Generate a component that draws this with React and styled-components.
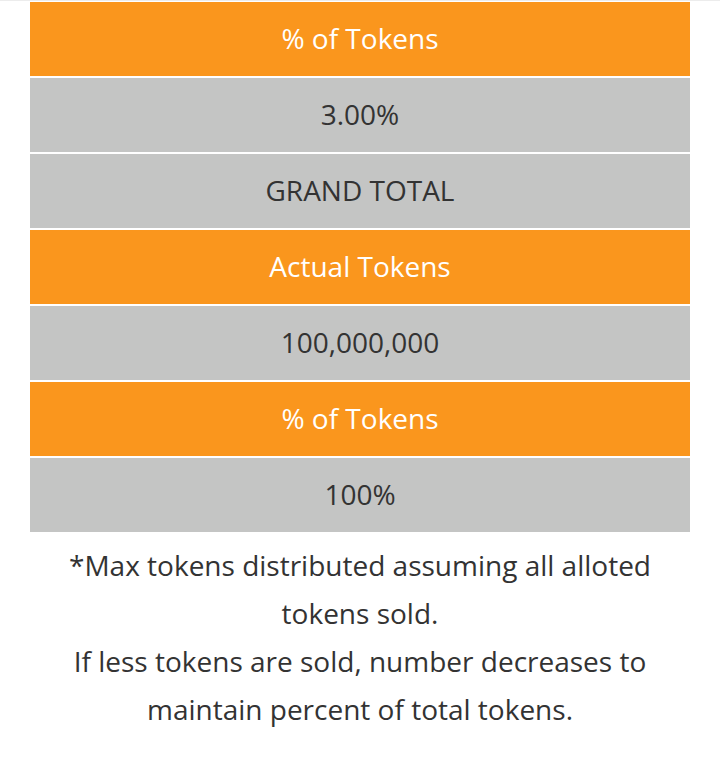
import styled, { createGlobalStyle } from "styled-components";

const GlobalStyle = createGlobalStyle`
    * {
        box-sizing: border-box;
    }
    body {
        margin: 0;
        background: #FFFFFF;
        font-family: 'Open Sans', 'Liberation Sans', sans-serif;
    }
`;

const rows = [
    { label: "% of Tokens", head: true },
    { label: "3.00%" },
    { label: "GRAND TOTAL" },
    { label: "Actual Tokens", head: true },
    { label: "100,000,000" },
    { label: "% of Tokens", head: true },
    { label: "100%" },
];

export default function App() {
    return (
        <Page>
            <GlobalStyle />
            <Table>
                {rows.map((row, i) => (
                    <Cell key={i} $head={row.head}>{row.label}</Cell>
                ))}
            </Table>
            <Note>
                <p>*Max tokens distributed assuming all alloted tokens sold.</p>
                <p>If less tokens are sold, number decreases to maintain percent of total tokens.</p>
            </Note>
        </Page>
    )
}

const Page = styled.div`
    width: 720px;
    min-height: 763px;
    border-top: 1px solid #ECECEC;
    padding-top: 1px;
    background: #FFFFFF;
`;

const Table = styled.div`
    width: 660px;
    margin: 0 auto;
    display: flex;
    flex-direction: column;
    gap: 2px;
`;

const Cell = styled.div`
    height: 74px;
    display: flex;
    align-items: center;
    justify-content: center;
    background: ${(p) => (p.$head ? "#FA961D" : "#C4C5C4")};
    color: ${(p) => (p.$head ? "#FFFFFF" : "#333333")};
    font-size: 28px;
    font-weight: 400;
    padding-bottom: 2px;
`;

const Note = styled.div`
    width: 660px;
    margin: 9px auto 0;
    padding: 0 8px;
    text-align: center;
    p {
        margin: 0;
        font-size: 28px;
        line-height: 48px;
        color: #333333;
    }
`;
